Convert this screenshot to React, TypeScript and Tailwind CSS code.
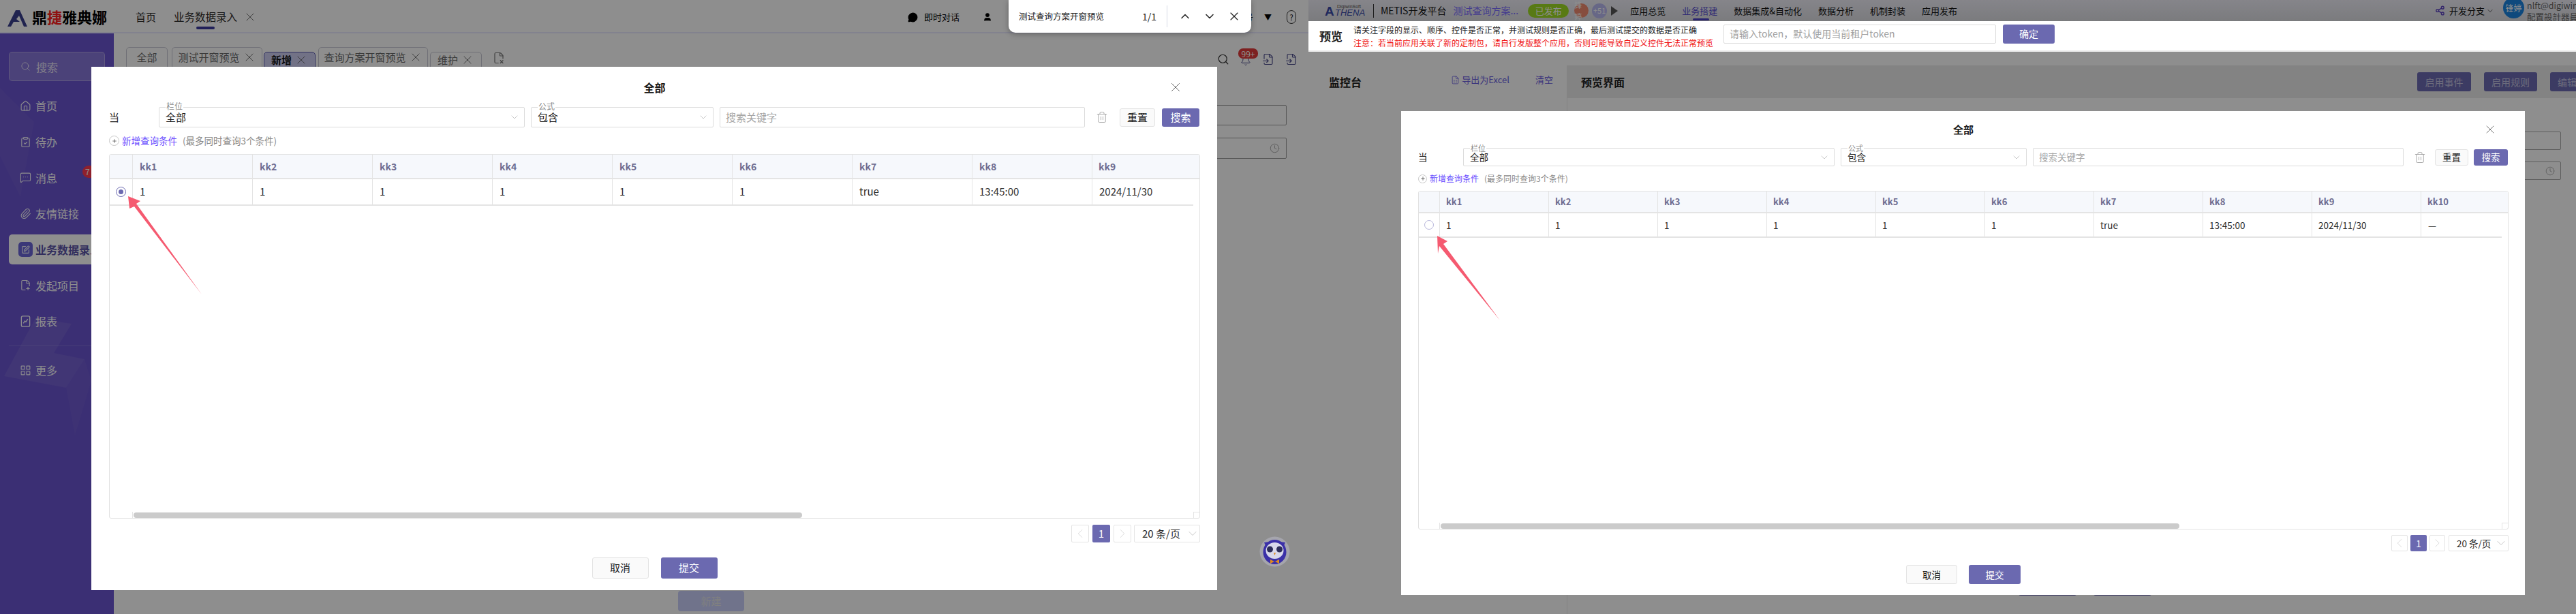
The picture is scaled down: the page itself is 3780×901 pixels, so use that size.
import React from "react";
import {
  Search, Home, ClipboardCheck, MessageSquareMore, Paperclip, SquarePen, FilePlus2, LayoutGrid,
  Trash2, ChevronDown, ChevronUp, ChevronLeft, ChevronRight, X, Plus, Clock, Bell, User, FileX2, FileInput, MessageCircleMore, Share2, FileSpreadsheet,
} from "lucide-react";

const font = "font-['Noto_Sans_CJK_SC','Noto_Sans',sans-serif]";

type Sz = {
  wrap: string; title: string; filter: string; dang: string; sel1: string; sel2: string; input: string; gap: string;
  base: string; trash: string; reset: string; search: string; bgap: string; label: string; addRow: string; addText: string; addIcon: string;
  table: string; headH: string; rowH: string; first: string; col: string; headText: string; bar: string;
  pager: string; pBtn: string; pBtn2: string; pSel: string; footer: string; fBtn: string; fBtn2: string; close: string; radio: string; dot: string;
};

const A: Sz = {
  wrap: "left-[134px] top-[98px] w-[1652px] h-[768px] pl-[26px] pr-[25px]",
  title: "h-[59px] text-[16px]",
  filter: "h-[30px] text-[15px]",
  dang: "w-[73px]",
  sel1: "w-[537px]",
  sel2: "w-[268px]",
  input: "w-[536px]",
  gap: "gap-[9px]",
  base: "text-[15px]",
  trash: "w-[42px] pl-[7px]",
  reset: "w-[52px] h-[27px] mr-[10px]",
  search: "w-[55px] h-[27px]",
  bgap: "",
  label: "-top-[9px] left-[9px] text-[12px]",
  addRow: "h-[39px] text-[13.5px]",
  addText: "ml-[4px] mr-[8px]",
  addIcon: "w-[15px] h-[15px]",
  table: "h-[535px]",
  headH: "h-[34px] text-[14px]",
  rowH: "h-[37px] text-[15px]",
  first: "w-[34px]",
  col: "w-[176px] pl-[10px]",
  headText: "",
  bar: "left-[35px] w-[981px]",
  pager: "mt-[9px] h-[26px] text-[15px]",
  pBtn: "w-[26px] mr-[5px]",
  pBtn2: "w-[26px] mr-[4px]",
  pSel: "w-[97px]",
  footer: "mt-[22px] gap-[18px]",
  fBtn: "w-[83px] h-[31px] text-[15px]",
  fBtn2: "w-[83px] h-[31px] text-[15px]",
  close: "right-[25px] w-[22px] h-[22px]",
  radio: "w-[15px] h-[15px]",
  dot: "w-[7px] h-[7px]",
};

const B: Sz = {
  wrap: "left-[136px] top-[163px] w-[1649px] h-[710px] pl-[25px] pr-[24px]",
  title: "h-[54px] text-[15px]",
  filter: "h-[27px] text-[13.5px]",
  dang: "w-[66px]",
  sel1: "w-[545px]",
  sel2: "w-[273px]",
  input: "w-[544px]",
  gap: "gap-[9px]",
  base: "text-[13.5px]",
  trash: "w-[37px] pl-[6px]",
  reset: "w-[49px] h-[24px] mr-[8px]",
  search: "w-[50px] h-[24px]",
  bgap: "",
  label: "-top-[8px] left-[9px] text-[11px]",
  addRow: "h-[36px] text-[12px]",
  addText: "ml-[4px] mr-[8px]",
  addIcon: "w-[13px] h-[13px]",
  table: "h-[497px]",
  headH: "h-[30px] text-[13px]",
  rowH: "h-[34px] text-[13.5px]",
  first: "w-[31px]",
  col: "w-[160px] pl-[9px]",
  headText: "",
  bar: "left-[32px] w-[1084px]",
  pager: "mt-[8px] h-[24px] text-[13.5px]",
  pBtn: "w-[24px] mr-[4px]",
  pBtn2: "w-[23px] mr-[5px]",
  pSel: "w-[88px]",
  footer: "mt-[20px] gap-[17px]",
  fBtn: "w-[75px] h-[28px] text-[13.5px]",
  fBtn2: "w-[76px] h-[28px] text-[13.5px]",
  close: "right-[17px] w-[20px] h-[20px]",
  radio: "w-[14px] h-[14px]",
  dot: "w-[6px] h-[6px]",
};

function Select({ s, w, label, value }: { s: Sz; w: string; label: string; value: string }) {
  return (
    <div className={`relative h-full ${w} shrink-0 border border-[#dcdcdc] rounded-[2px] flex items-center pl-[9px] text-[#1c1c1c]`}>
      <span className={`absolute ${s.label} bg-white px-[1px] leading-[14px] text-[#8a8a8a]`}>{label}</span>
      <span className="flex-1">{value}</span>
      <ChevronDown className="w-[16px] h-[16px] mr-[6px] text-[#b8b8b8]" strokeWidth={1.2} />
    </div>
  );
}

function DataTable({ s, cols, vals, checked }: { s: Sz; cols: string[]; vals: string[]; checked: boolean }) {
  return (
    <div className={`relative ${s.table} border border-[#e2e2e2] rounded-[3px] overflow-hidden bg-white`}>
      <div className={`flex ${s.headH} box-content bg-[#f6f8fc] border-b-2 border-[#e4e4e4] font-bold text-[#6e6c90]`}>
        <div className={`${s.first} shrink-0 border-r border-[#e4e4e4]`} />
        {cols.map((c, i) => (
          <div key={c} className={`${i === cols.length - 1 ? "flex-1 pl-[9px]" : `${s.col} shrink-0 border-r border-[#e4e4e4]`} flex items-center`}>{c}</div>
        ))}
      </div>
      <div className={`flex ${s.rowH} box-content mr-[9px] border-b-2 border-[#e4e4e4] text-[#2e2e2e]`}>
        <div className={`${s.first} shrink-0 border-r border-[#e4e4e4] flex items-center justify-center`}>
          <span className={`${s.radio} rounded-full border ${checked ? "border-[#6b69b0]" : "border-[#b9b8dc]"} flex items-center justify-center`}>
            {checked && <span className={`${s.dot} rounded-full bg-[#6b69b0]`} />}
          </span>
        </div>
        {vals.map((v, i) => (
          <div key={i} className={`${i === vals.length - 1 ? "flex-1 pl-[10px]" : `${s.col} shrink-0 border-r border-[#e4e4e4]`} flex items-center`}>{v}</div>
        ))}
      </div>
      <div className={`absolute bottom-0 ${s.bar} h-[8px] bg-[#cbcbcb] rounded-[4px]`} />
      <div className={`absolute bottom-0 left-0 ${s.first} h-[9px] border-r border-[#e4e4e4]`} />
      <div className="absolute bottom-0 right-0 w-[9px] h-[9px] border-l border-t border-[#e4e4e4]" />
    </div>
  );
}

function Modal({ s, cols, vals, checked }: { s: Sz; cols: string[]; vals: string[]; checked: boolean }) {
  return (
    <div className={`absolute z-20 ${s.wrap} bg-white flex flex-col`}>
      <div className={`relative ${s.title} shrink-0 flex items-center justify-center font-bold text-[#1a1a1a]`}>
        全部
        <X className={`absolute ${s.close} text-[#555]`} strokeWidth={1} />
      </div>
      <div className={`flex items-center ${s.filter} ${s.gap} shrink-0`}>
        <span className={`${s.dang} -mr-[9px] shrink-0 text-[#1c1c1c]`}>当</span>
        <Select s={s} w={s.sel1} label="栏位" value="全部" />
        <Select s={s} w={s.sel2} label="公式" value="包含" />
        <div className={`h-full ${s.input} shrink-0 border border-[#dcdcdc] rounded-[2px] flex items-center pl-[8px] text-[#a6a6a6]`}>搜索关键字</div>
        <div className={`${s.trash} -mr-[9px] shrink-0 flex items-center`}>
          <Trash2 className="w-[18px] h-[18px] text-[#9a9a9a]" strokeWidth={1.1} />
        </div>
        <button className={`${s.reset} shrink-0 border border-[#e3e3e3] bg-[#fafafa] rounded-[3px] text-[#222] flex items-center justify-center`}>重置</button>
        <button className={`${s.search} -ml-[9px] shrink-0 bg-[#6b69b0] rounded-[3px] text-white flex items-center justify-center`}>搜索</button>
      </div>
      <div className={`flex items-center ${s.addRow} shrink-0`}>
        <span className={`${s.addIcon} rounded-full border border-[#c9c9c9] flex items-center justify-center text-[#333]`}>
          <Plus className="w-[8px] h-[8px]" strokeWidth={2} />
        </span>
        <span className={`${s.addText} text-[#6a4dff]`}>新增查询条件</span>
        <span className="text-[#8a8a8a]">(最多同时查询3个条件)</span>
      </div>
      <DataTable s={s} cols={cols} vals={vals} checked={checked} />
      <div className={`flex justify-end ${s.pager} shrink-0`}>
        <span className={`${s.pBtn} border border-[#e4e4e4] rounded-[2px] flex items-center justify-center text-[#cfcfcf]`}><ChevronLeft className="w-[22px] h-[22px]" strokeWidth={0.8} /></span>
        <span className={`${s.pBtn} bg-[#6b69b0] rounded-[2px] flex items-center justify-center text-white`}>1</span>
        <span className={`${s.pBtn2} border border-[#e4e4e4] rounded-[2px] flex items-center justify-center text-[#cfcfcf]`}><ChevronRight className="w-[22px] h-[22px]" strokeWidth={0.8} /></span>
        <span className={`${s.pSel} border border-[#e4e4e4] rounded-[2px] flex items-center pl-[11px] text-[#2a2a2a]`}>
          <span className="flex-1 whitespace-nowrap">20 条/页</span>
          <ChevronDown className="w-[20px] h-[20px] shrink-0 text-[#bdbdbd]" strokeWidth={1} />
        </span>
      </div>
      <div className={`flex justify-center ${s.footer} shrink-0`}>
        <button className={`${s.fBtn} border border-[#e3e3e3] bg-[#fafafa] rounded-[3px] text-[#222] flex items-center justify-center`}>取消</button>
        <button className={`${s.fBtn2} bg-[#6b69b0] rounded-[3px] text-white flex items-center justify-center`}>提交</button>
      </div>
    </div>
  );
}

function Tab({ t, low, active, close }: { t: string; low?: boolean; active?: boolean; close?: boolean }) {
  return (
    <div
      className={`shrink-0 flex items-center justify-center gap-[4px] rounded-t-[5px] border text-[15px] ${low ? "mt-[7px] h-[24px]" : "h-[30px]"} ${
        active ? "bg-[#cdcdf0] border-[#5a5ab0] text-[#111] font-bold" : "border-[#c8c8d4] text-[#6a6a6a]"
      }`}
    >
      {t}
      {close && <X className="w-[20px] h-[20px] text-[#555]" strokeWidth={1} />}
    </div>
  );
}

function SideItem({ icon, t, active, badge }: { icon: React.ReactNode; t: string; active?: boolean; badge?: boolean }) {
  return (
    <div className="h-[52.7px] flex items-center shrink-0">
      <div className={`relative flex items-center w-[141px] h-[44px] ml-[13px] rounded-[5px] text-[16px] whitespace-nowrap ${active ? "bg-white text-[#5b53a8] font-bold" : "text-white"}`}>
        <span className="w-[39px] flex justify-center shrink-0 pl-[10px]">{icon}</span>
        {t}
        {badge && <span className="absolute right-[12px] top-[4px] w-[21px] h-[18px] bg-[#ff3a50] rounded-[9px] text-[12px] pl-[4px] leading-[18px] text-white">7</span>}
      </div>
    </div>
  );
}

const ic = "w-[17px] h-[17px]";

function LeftPage() {
  return (
    <div className="relative w-[1920px] h-[901px] shrink-0 overflow-hidden bg-white flex flex-col">
      <div className="h-[3px] shrink-0 bg-[#fff]" />
      <header className="relative h-[46px] shrink-0 bg-white border-b-2 border-[#e9e9ff] flex items-center text-[#2a2a2a]">
        <svg viewBox="0 0 30 24" className="absolute left-[11px] top-[12px] w-[30px] h-[24px]">
          <path d="M0 24 L12 0 L18 0 L29 24 L24 24 L17 8 L13 13 L18 17 L9 17 L5 24 Z" fill="#3a3f8f" />
        </svg>
        <span className="absolute left-[47px] top-[6px] text-[22px] leading-[30px] font-bold text-black">
          鼎<span className="text-[#ff2222]">捷</span>雅典娜
        </span>
        <span className="ml-[199px] text-[15px]">首页</span>
        <span className="relative ml-[26px] text-[15.5px]">
          业务数据录入
          <span className="absolute left-[33px] -bottom-[6px] w-[27px] h-[4px] rounded-[2px] bg-[#3c3aa0]" />
        </span>
        <X className="w-[20px] h-[20px] ml-[9px] text-[#555]" strokeWidth={1} />
        <div className="ml-auto flex items-center text-[13px] text-black">
          <MessageCircleMore className="w-[15px] h-[15px]" fill="black" />
          <span className="ml-[9px]">即时对话</span>
          <User className="w-[14px] h-[14px] ml-[34px]" fill="black" />
          <span className="ml-[372px] -translate-x-[2px]">号</span>
          <span className="ml-[14px] text-[11px]">▼</span>
          <span className="ml-[22px] mr-[18px] w-[14px] h-[20px] rounded-full border border-[#333] text-[11px] leading-[18px] text-center">?</span>
        </div>
      </header>
      <div className="flex flex-1 min-h-0">
        <aside className="relative w-[167px] shrink-0 bg-[#6b55d0] flex flex-col pt-[27px] text-white overflow-hidden">
          <svg viewBox="0 0 167 852" className="absolute inset-0 w-[167px] h-[852px]">
            <polygon points="0,80 50,130 30,240 0,180" fill="#ffffff" opacity="0.03" />
            <polygon points="52,418 105,426 79,469 124,478 97,520 6,503" fill="#ffffff" opacity="0.07" />
            <polygon points="124,478 134,510 110,590 97,520" fill="#ffffff" opacity="0.03" />
          </svg>
          <div className="relative w-[141px] h-[43px] ml-[13px] shrink-0 rounded-[5px] bg-white/20 border border-white/30 flex items-center pl-[16px] text-[16px] text-white/80">
            <Search className="w-[15px] h-[17px] mr-[8px]" strokeWidth={1.5} />
            搜索
          </div>
          <div className="relative mt-[10px] flex flex-col">
            <SideItem icon={<Home className={ic} strokeWidth={1.5} />} t="首页" />
            <SideItem icon={<ClipboardCheck className={ic} strokeWidth={1.5} />} t="待办" />
            <SideItem icon={<MessageSquareMore className={ic} strokeWidth={1.5} />} t="消息" badge />
            <SideItem icon={<Paperclip className={ic} strokeWidth={1.5} />} t="友情链接" />
            <SideItem
              active
              icon={<span className="w-[21px] h-[22px] rounded-[5px] bg-[#6b65d8] flex items-center justify-center text-white"><SquarePen className="w-[13px] h-[13px]" /></span>}
              t="业务数据录入"
            />
            <SideItem icon={<FilePlus2 className={ic} strokeWidth={1.5} />} t="发起项目" />
            <SideItem
              icon={
                <svg viewBox="0 0 18 18" className="w-[17px] h-[17px]" fill="none" stroke="currentColor" strokeWidth="1.4">
                  <rect x="2.5" y="1" width="13" height="16" rx="2" />
                  <polyline points="5.5,12 8,8.5 9.5,10 12.5,5.5" />
                </svg>
              }
              t="报表"
            />
            <div className="h-px bg-white/15 mx-[13px] mt-[9px]" />
            <div className="mt-[9px]">
              <SideItem icon={<LayoutGrid className={ic} strokeWidth={1.5} />} t="更多" />
            </div>
          </div>
        </aside>
        <main className="flex-1 min-w-0 flex flex-col pt-[20px]">
          <div className="flex items-start pl-[18px] pr-[16px] h-[30px] shrink-0">
            <div className="w-[61px] mr-[6px]"><Tab t="全部" /></div>
            <div className="w-[133px] mr-[2px]"><Tab t="测试开窗预览" close /></div>
            <div className="w-[76px] mr-[4px]"><Tab t="新增" low active close /></div>
            <div className="w-[161px] mr-[3px]"><Tab t="查询方案开窗预览" close /></div>
            <div className="w-[76px] mr-[16px]"><Tab t="维护" low close /></div>
            <FileX2 className="w-[18px] h-[20px] mt-[6px] text-[#777]" strokeWidth={1.6} />
            <div className="ml-auto flex items-center gap-[16px] mt-[8px] text-[#333]">
              <Search className="w-[18px] h-[20px]" strokeWidth={1.6} />
              <div className="relative w-[16px] h-[20px]">
                <Bell className="absolute top-[4px] w-[16px] h-[16px] text-[#4a4a8a]" strokeWidth={1.5} />
                <span className="absolute -top-[6px] left-[-3px] w-[29px] h-[15px] rounded-[7px] bg-[#e03a3a] text-white text-[12px] leading-[15px] text-center">99+</span>
              </div>
              <FileInput className="w-[18px] h-[18px] text-[#4a4a8a]" strokeWidth={1.5} />
              <FileInput className="w-[18px] h-[18px] text-[#4a4a8a]" strokeWidth={1.5} />
            </div>
          </div>
          <div className="mt-[55px] ml-auto mr-[32px] w-[500px] h-[30px] border border-[#9a9a9a] rounded-[2px]" />
          <div className="mt-[18px] ml-auto mr-[32px] w-[500px] h-[31px] border border-[#9a9a9a] rounded-[2px] flex items-center justify-end pr-[9px] text-[#999]">
            <Clock className="w-[15px] h-[15px]" strokeWidth={1.3} />
          </div>
          <div className="mt-auto mb-[4px] ml-[828px] w-[97px] h-[30px] rounded-[4px] bg-[#c9cffa] text-[#e6e6e6] text-[15px] flex items-center justify-center">新建</div>
        </main>
      </div>
      <div className="absolute inset-0 z-10 bg-[#00000071]" />
      <Modal
        s={A}
        cols={["kk1", "kk2", "kk3", "kk4", "kk5", "kk6", "kk7", "kk8", "kk9"]}
        vals={["1", "1", "1", "1", "1", "1", "true", "13:45:00", "2024/11/30"]}
        checked
      />
      <svg viewBox="0 0 1920 901" className="absolute inset-0 z-30 w-[1920px] h-[901px] pointer-events-none">
        <polygon points="188,288 206,295 200,299 296,432 197,303 190,306" fill="#f55a70" />
      </svg>
      <div className="absolute z-30 left-[1480px] top-0 w-[356px] h-[48px] bg-white rounded-b-[10px] shadow-[0_2px_8px_rgba(0,0,0,0.3)] flex items-center text-[12.5px] text-[#222]">
        <span className="ml-[15px] w-[181px]">测试查询方案开窗预览</span>
        <span className="w-[36px] text-[14px]">1/1</span>
        <span className="w-px h-[32px] bg-[#d5dbe5]" />
        <ChevronUp className="w-[20px] h-[20px] ml-[16px]" strokeWidth={1.8} />
        <ChevronDown className="w-[20px] h-[20px] ml-[16px]" strokeWidth={1.8} />
        <X className="w-[20px] h-[20px] ml-[16px]" strokeWidth={1.4} />
      </div>
      <div className="absolute z-30 left-[1848px] top-[787px] w-[45px] h-[45px]">
        <svg viewBox="0 0 45 45" className="w-full h-full">
          <circle cx="22.5" cy="22.5" r="22" fill="#a5a5ad" />
          <ellipse cx="22.5" cy="23" rx="17" ry="18" fill="#3b30a8" />
          <polygon points="7,9 15,8 10,16" fill="#3b30a8" />
          <polygon points="38,9 30,8 35,16" fill="#3b30a8" />
          <ellipse cx="22.5" cy="21" rx="13" ry="12" fill="#d8d8ea" />
          <circle cx="15.5" cy="19" r="4.5" fill="#2c2c58" />
          <circle cx="29.5" cy="19" r="4.5" fill="#2c2c58" />
          <polygon points="21,24 24,24 22.5,28" fill="#e08a20" />
          <polygon points="16,34 22,37 16,40" fill="#e08a20" />
          <polygon points="29,34 23,37 29,40" fill="#e08a20" />
        </svg>
      </div>
    </div>
  );
}

function RightPage() {
  const nav = ["应用总览", "业务搭建", "数据集成&自动化", "数据分析", "机制封装", "应用发布"];
  return (
    <div className="relative w-[1860px] h-[901px] shrink-0 overflow-hidden bg-white flex flex-col">
      <header className="h-[31px] shrink-0 bg-gradient-to-b from-[#f0eff8] to-[#dcdde2] flex items-center text-[#111] text-[13px]">
        <span className="relative ml-[24px] w-[58px] h-[20px] shrink-0 text-[#3a4aa8] font-['Liberation_Sans',sans-serif] italic leading-none">
          <span className="absolute left-0 bottom-0 text-[19px] font-bold not-italic">A</span>
          <span className="absolute left-[15px] bottom-[1px] text-[13px]">THENA</span>
          <span className="absolute left-[18px] top-0 text-[7px] not-italic text-[#555]">DigiwinSoft</span>
        </span>
        <span className="ml-[13px] w-px h-[20px] bg-[#333]" />
        <span className="ml-[10px] text-[14px]">METIS开发平台</span>
        <span className="ml-[10px] text-[14px] text-[#7a6bff]">测试查询方案...</span>
        <span className="ml-[14px] w-[60px] h-[20px] rounded-[10px] bg-[#9fdc24] text-white text-[13px] flex items-center justify-center">已发布</span>
        <span className="ml-[8px] w-[21px] h-[21px] rounded-full bg-[#f08a70] text-white text-[11px] flex items-center justify-center">锋婷</span>
        <span className="ml-[5px] w-[22px] h-[22px] rounded-full bg-[#b9b9f0] text-white text-[11px] flex items-center justify-center">+51</span>
        <span className="ml-[6px] w-0 h-0 border-y-[7px] border-y-transparent border-l-[10px] border-l-[#555]" />
        <nav className="ml-[18px] flex gap-[24px]">
          {nav.map((n) => (
            <span key={n} className={`relative ${n === "业务搭建" ? "text-[#5a50d0]" : ""} text-[13px]`}>
              {n}
              {n === "业务搭建" && <span className="absolute left-[16px] -bottom-[5px] w-[24px] h-[3px] rounded-[2px] bg-[#4b3fc8]" />}
            </span>
          ))}
        </nav>
        <div className="ml-auto flex items-center">
          <Share2 className="w-[15px] h-[15px] text-[#5a3fc0]" strokeWidth={2.2} />
          <span className="ml-[6px]">开发分支</span>
          <ChevronDown className="w-[12px] h-[12px] ml-[2px]" strokeWidth={1.3} />
          <span className="ml-[13px] w-[31px] h-[31px] -mt-[8px] rounded-full bg-[#1a84e0] text-white text-[12px] flex items-center justify-center">锋婷</span>
          <div className="ml-[4px] w-[72px] overflow-hidden whitespace-nowrap text-[#666] text-[12.5px] leading-[17px]">
            <div>nlft@digiwin.com</div>
            <div>配置設計器員工</div>
          </div>
        </div>
      </header>
      <div className="relative z-20 h-[45px] shrink-0 bg-white border-b-2 border-[#e8e8e8] flex items-center">
        <span className="ml-[16px] w-[50px] text-[17px] font-bold text-[#222]">预览</span>
        <div className="text-[12px] leading-[19px]">
          <div className="text-[#222]">请关注字段的显示、顺序、控件是否正常，并测试规则是否正确，最后测试提交的数据是否正确</div>
          <div className="text-[#f01010]">注意：若当前应用关联了新的定制包，请自行发版整个应用，否则可能导致自定义控件无法正常预览</div>
        </div>
        <div className="ml-[15px] -mt-[6px] w-[400px] h-[28px] border border-[#dcdcdc] rounded-[2px] flex items-center pl-[8px] text-[14px] text-[#a0a0a0]">请输入token，默认使用当前租户token</div>
        <button className="ml-[10px] -mt-[6px] w-[76px] h-[28px] rounded-[3px] bg-[#6b69b0] text-white text-[14px] flex items-center justify-center">确定</button>
      </div>
      <div className="flex flex-1 min-h-0 mt-[20px]">
        <section className="w-[380px] shrink-0 border-r border-[#eeeeee]">
          <div className="h-[48px] flex items-center pl-[30px] pr-[20px] text-[#6a5ee0] text-[13px]">
            <span className="text-[16px] font-bold text-[#222] mr-auto">监控台</span>
            <FileSpreadsheet className="w-[13px] h-[17px] mr-[3px] -mt-[6px]" strokeWidth={1.5} />
            <span className="-mt-[6px]">导出为Excel</span>
            <span className="ml-[38px] -mt-[6px]">清空</span>
          </div>
        </section>
        <section className="flex-1 min-w-0 flex flex-col">
          <div className="h-[48px] shrink-0 bg-[#ebebeb] flex items-center pl-[20px]">
            <span className="text-[16px] font-bold text-[#222] mr-auto">预览界面</span>
            <div className="flex gap-[19px] -mr-[40px] text-white/60 text-[14px]">
              <span className="w-[79px] h-[28px] rounded-[3px] bg-[#6c6ab2] flex items-center justify-center">启用事件</span>
              <span className="w-[78px] h-[28px] rounded-[3px] bg-[#6c6ab2] flex items-center justify-center">启用规则</span>
              <span className="w-[78px] h-[28px] rounded-[3px] bg-[#6c6ab2] flex items-center justify-center">编辑数据</span>
            </div>
          </div>
          <div className="flex-1 min-h-0 ml-[20px] bg-[#ffffff] flex flex-col pr-[22px]">
            <div className="ml-auto mt-[49px] w-[400px] h-[27px] border border-[#a8a8a8] rounded-[2px]" />
            <div className="ml-auto mt-[17px] w-[400px] h-[27px] border border-[#a8a8a8] rounded-[2px] flex items-center justify-end pr-[8px] text-[#999]">
              <Clock className="w-[14px] h-[14px]" strokeWidth={1.3} />
            </div>
            <div className="mt-[582px] ml-[642px] flex gap-[25px]">
              <span className="w-[85px] h-[28px] rounded-[3px] bg-[#6c6ab2]" />
              <span className="w-[85px] h-[28px] rounded-[3px] bg-[#6c6ab2]" />
            </div>
          </div>
        </section>
      </div>
      <div className="absolute inset-0 z-10 bg-[#00000071]" />
      <Modal
        s={B}
        cols={["kk1", "kk2", "kk3", "kk4", "kk5", "kk6", "kk7", "kk8", "kk9", "kk10"]}
        vals={["1", "1", "1", "1", "1", "1", "true", "13:45:00", "2024/11/30", "—"]}
        checked={false}
      />
      <svg viewBox="0 0 1860 901" className="absolute inset-0 z-30 w-[1860px] h-[901px] pointer-events-none">
        <polygon points="189,346 204,354 198,358 281,470 192,361 190,372" fill="#f55a70" />
      </svg>
    </div>
  );
}

export default function App() {
  return (
    <div className={`${font} w-[3780px] h-[901px] flex overflow-hidden`}>
      <LeftPage />
      <RightPage />
    </div>
  );
}
